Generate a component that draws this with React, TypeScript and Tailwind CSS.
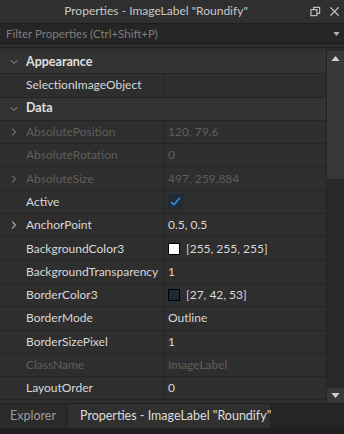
import { ChevronDown, ChevronRight } from "lucide-react";

type Row =
    | { kind: "header"; name: string }
    | { kind: "prop"; name: string; value?: string; dim?: boolean; expand?: boolean; check?: boolean; swatch?: string };

const rows: Row[] = [
    { kind: "header", name: "Appearance" },
    { kind: "prop", name: "SelectionImageObject", value: "" },
    { kind: "header", name: "Data" },
    { kind: "prop", name: "AbsolutePosition", value: "120, 79.6", dim: true, expand: true },
    { kind: "prop", name: "AbsoluteRotation", value: "0", dim: true },
    { kind: "prop", name: "AbsoluteSize", value: "497, 259.884", dim: true, expand: true },
    { kind: "prop", name: "Active", check: true },
    { kind: "prop", name: "AnchorPoint", value: "0.5, 0.5", expand: true },
    { kind: "prop", name: "BackgroundColor3", value: "[255, 255, 255]", swatch: "#ffffff" },
    { kind: "prop", name: "BackgroundTransparency", value: "1" },
    { kind: "prop", name: "BorderColor3", value: "[27, 42, 53]", swatch: "#1b2a35" },
    { kind: "prop", name: "BorderMode", value: "Outline" },
    { kind: "prop", name: "BorderSizePixel", value: "1" },
    { kind: "prop", name: "ClassName", value: "ImageLabel", dim: true },
    { kind: "prop", name: "LayoutOrder", value: "0" },
];

function PropRow({ row }: { row: Row }) {
    if (row.kind === "header") {
        return (
            <div className="flex items-center h-[23.3px] border-b border-[#242424] bg-[#333333]">
                <div className="w-[26px] flex justify-center pl-[1px]">
                    <ChevronDown className="w-[12px] h-[12px] text-[#9a9a9a]" strokeWidth={2} />
                </div>
                <span className="text-[12.5px] font-bold text-[#e0e0e0]">{row.name}</span>
            </div>
        );
    }
    const textCol = row.dim ? "text-[#5e5e5e]" : "text-[#d8d8d8]";
    return (
        <div className="flex items-center h-[23.3px] border-b border-[#242424] bg-[#2e2e2e]">
            <div className="w-[26px] flex justify-center pl-[1px]">
                {row.expand && (
                    <ChevronRight className={`w-[12px] h-[12px] ${row.dim ? "text-[#6a6a6a]" : "text-[#a0a0a0]"}`} strokeWidth={2.5} />
                )}
            </div>
            <div className={`w-[137px] text-[12px] whitespace-nowrap overflow-hidden ${textCol}`}>{row.name}</div>
            <div className="h-full w-px bg-[#242424]" />
            <div className={`flex-1 flex items-center pl-[4px] text-[12px] whitespace-nowrap ${textCol}`}>
                {row.check && (
                    <div className="w-[15px] h-[15px] bg-[#1f2b36] flex items-center justify-center">
                        <svg viewBox="0 0 16 16" className="w-[13px] h-[13px]">
                            <path d="M2.5 8.5 L6 12 L13.5 3.5" fill="none" stroke="#3d9be9" strokeWidth="1.8" />
                        </svg>
                    </div>
                )}
                {row.swatch && (
                    <div className="w-[12px] h-[12px] border border-black mr-[6px]" style={{ background: row.swatch }} />
                )}
                {row.value}
            </div>
        </div>
    );
}

export default function App() {
    return (
        <div className="w-[344px] h-[434px] bg-[#2e2e2e] flex flex-col overflow-hidden" style={{ fontFamily: "Lato, 'Noto Sans', sans-serif" }}>
            <div className="h-[22px] flex items-center bg-[#2f2f2f] text-[#c8c8c8] text-[12px] shrink-0">
                <div className="flex-1 text-center pl-[2px] whitespace-nowrap">Properties - ImageLabel "Roundify"</div>
                <div className="flex items-center gap-[8px] pr-[4px]">
                    <svg viewBox="0 0 12 12" className="w-[11px] h-[11px]">
                        <rect x="1" y="4" width="6.5" height="6.5" fill="none" stroke="#bdbdbd" strokeWidth="1.3" />
                        <path d="M4 4 V1.5 H10.5 V8 H7.5" fill="none" stroke="#bdbdbd" strokeWidth="1.3" />
                    </svg>
                    <svg viewBox="0 0 12 12" className="w-[11px] h-[11px]">
                        <path d="M1.5 1.5 L10.5 10.5 M10.5 1.5 L1.5 10.5" stroke="#c8c8c8" strokeWidth="1.5" />
                    </svg>
                </div>
            </div>
            <div className="h-[21px] mt-[1px] flex items-center bg-[#252525] border-y border-[#1e1e1e] shrink-0">
                <span className="flex-1 pl-[6px] text-[11.5px] text-[#7e7e7e] whitespace-nowrap">Filter Properties (Ctrl+Shift+P)</span>
                <svg viewBox="0 0 8 5" className="w-[7px] h-[4px] mr-[4px]">
                    <path d="M0 0 H8 L4 5 Z" fill="#b0b0b0" />
                </svg>
            </div>
            <div className="flex flex-1 min-h-0 mt-[3px] border-t border-[#222222]">
                <div className="flex-1 flex flex-col overflow-hidden pt-[3px] border-r border-[#222222]">
                    {rows.map((r) => (
                        <PropRow key={r.name} row={r} />
                    ))}
                </div>
                <div className="w-[17px] flex flex-col bg-[#292929]">
                    <div className="h-[15px] mt-[3px] flex items-center justify-center bg-[#383838]">
                        <svg viewBox="0 0 10 6" className="w-[9px] h-[5px]">
                            <path d="M0 6 H10 L5 0 Z" fill="#cfcfcf" />
                        </svg>
                    </div>
                    <div className="h-[113px] bg-[#383838]" />
                    <div className="flex-1" />
                    <div className="h-[15px] flex items-center justify-center bg-[#383838]">
                        <svg viewBox="0 0 10 6" className="w-[9px] h-[5px]">
                            <path d="M0 0 H10 L5 6 Z" fill="#cfcfcf" />
                        </svg>
                    </div>
                </div>
            </div>
            <div className="h-[25px] flex items-stretch bg-[#252525] text-[12.5px] shrink-0 border-t border-[#222222]">
                <div className="w-[66px] flex items-center justify-center bg-[#2b2b2b] text-[#9c9c9c]">Explorer</div>
                <div className="w-[2px]" />
                <div className="w-[202px] flex items-center pl-[12px] bg-[#303030] text-[#dedede] whitespace-nowrap">Properties - ImageLabel "Roundify"</div>
            </div>
            <div className="h-[6px] bg-[#1f1f1f] shrink-0" />
        </div>
    );
}
